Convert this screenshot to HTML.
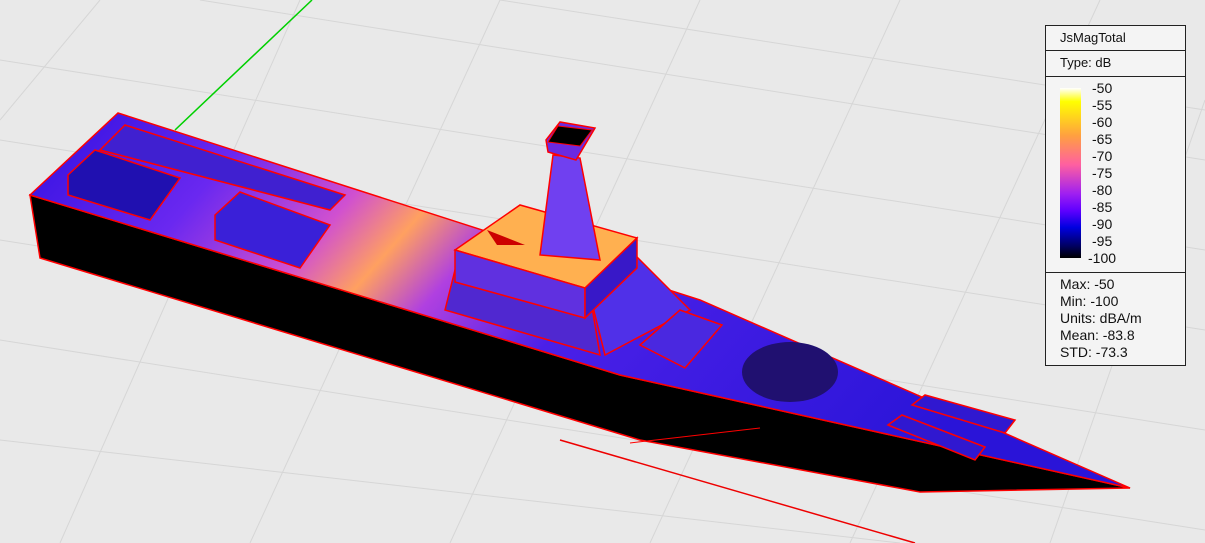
<!DOCTYPE html>
<html><head><style>
body{margin:0;width:1205px;height:543px;overflow:hidden;background:#e9e9e9;font-family:"Liberation Sans",sans-serif}
#lg{position:absolute;left:1045px;top:25px;width:139px;height:339px;background:#f4f4f4;border:1px solid #222;font-size:13px;color:#111}
.r{border-bottom:1px solid #222;padding-left:14px;box-sizing:border-box}
.t{height:25px;line-height:24px}
.bar{position:absolute;left:14px;top:62px;width:21px;height:170px;background:linear-gradient(#fff,#ffff00 8%,#ffa040 28%,#ff60a0 45%,#a020f0 62%,#6000ff 72%,#0000e0 82%,#000060 93%,#000)}
.lab{position:absolute;left:46px;top:54px;line-height:17px;font-size:14px}
.st{position:absolute;top:250px;left:14px;line-height:17px;font-size:14px}
</style></head><body>
<svg width="1205" height="543" style="position:absolute;left:0;top:0">
<defs>
<linearGradient id="deck" x1="0" y1="0" x2="1" y2="0.3">
<stop offset="0" stop-color="#3010e0"/><stop offset="0.2" stop-color="#6a28f0"/><stop offset="0.33" stop-color="#d050d0"/><stop offset="0.4" stop-color="#ffa060"/><stop offset="0.47" stop-color="#b040e0"/><stop offset="0.6" stop-color="#4a20e8"/><stop offset="1" stop-color="#2a14d8"/></linearGradient>
</defs>
<g stroke="#d6d6d6" stroke-width="1" fill="none">
<path d="M0 60L1205 250M0 140L1205 330M0 240L1205 430M0 340L1205 530M0 440L900 543M200 0L1205 160M500 0L1205 110"/>
<path d="M100 0L0 120M300 0L60 543M500 0L250 543M700 0L450 543M900 0L650 543M1100 0L850 543M1205 100L1050 543"/>
</g>
<line x1="175" y1="130" x2="312" y2="0" stroke="#00d000" stroke-width="1.5"/>
<line x1="560" y1="440" x2="915" y2="543" stroke="#e00" stroke-width="1.5"/>
<polygon points="30,195 40,258 640,440 920,492 1130,488 620,375" fill="#000" stroke="#f00" stroke-width="1.5"/>
<polygon points="30,195 118,113 700,300 1130,488 620,375" fill="url(#deck)" stroke="#f00" stroke-width="1.5"/>
<polygon points="445,310 460,250 590,295 600,355" fill="#5028d0" stroke="#f00" stroke-width="1.5"/>
<polygon points="590,295 635,255 690,310 605,355" fill="#5030e8" stroke="#f00" stroke-width="1.5"/>
<polygon points="455,250 520,205 637,238 585,288" fill="#ffb050" stroke="#f00" stroke-width="1.5"/>
<polygon points="455,250 585,288 585,318 455,282" fill="#6030e0" stroke="#f00" stroke-width="1.5"/>
<polygon points="585,288 637,238 637,268 585,318" fill="#3818c8" stroke="#f00" stroke-width="1.5"/>
<polygon points="540,255 553,155 580,158 600,260" fill="#7040f0" stroke="#f00" stroke-width="1.5"/>
<polygon points="546,140 560,122 595,128 582,150 576,160 548,152" fill="#6a2ae0" stroke="#f00" stroke-width="1.5"/>
<polygon points="558,126 592,130 580,146 548,142" fill="#000" stroke="#f00"/>
<polygon points="487,230 525,245 497,245" fill="#c00"/>
<polygon points="68,175 95,150 180,178 150,220 68,195" fill="#2010b0" stroke="#f00" stroke-width="1.5"/>
<polygon points="215,215 240,192 330,225 300,268 215,240" fill="#3a20d8" stroke="#f00" stroke-width="1.5"/>
<polygon points="100,150 125,125 345,195 330,210" fill="#4020d0" stroke="#f00" stroke-width="1.5"/>
<polygon points="640,345 680,310 722,325 685,368" fill="#4a28e0" stroke="#f00" stroke-width="1.5"/>
<ellipse cx="790" cy="372" rx="48" ry="30" fill="#201070"/>
<polygon points="912,405 925,395 1015,420 1005,433" fill="#3018d0" stroke="#f00" stroke-width="1.5"/>
<polygon points="888,425 902,415 985,447 975,460" fill="#3018d0" stroke="#f00" stroke-width="1.5"/>
<line x1="630" y1="443" x2="760" y2="428" stroke="#f00"/>
</svg>
<div id="lg">
<div class="r t">JsMagTotal</div>
<div class="r t" style="height:26px">Type: dB</div>
<div class="r" style="height:196px;position:relative"></div>
<div class="bar"></div>
<div class="lab">-50<br>-55<br>-60<br>-65<br>-70<br>-75<br>-80<br>-85<br>-90<br>-95<br><span style="margin-left:-4px">-100</span></div>
<div class="st">Max: -50<br>Min: -100<br>Units: dBA/m<br>Mean: -83.8<br>STD: -73.3</div>
</div>
</body></html>
